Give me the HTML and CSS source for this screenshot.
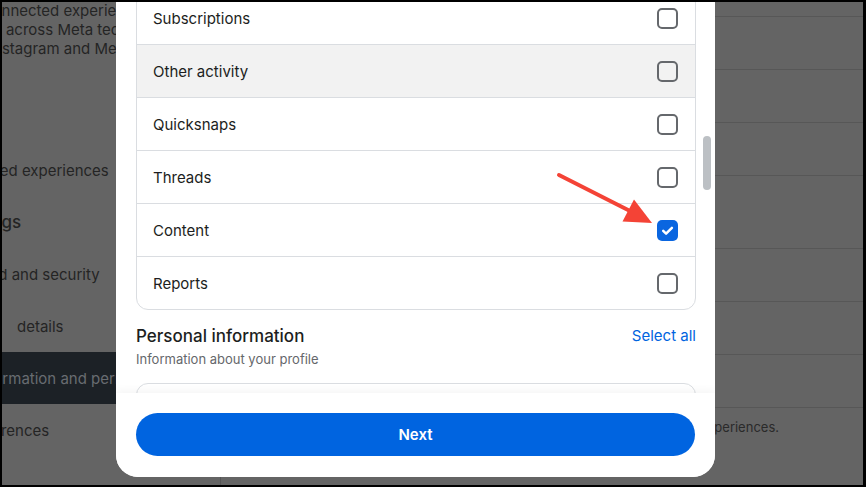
FILE: index.html
```html
<!DOCTYPE html>
<html lang="en">
<head>
<meta charset="utf-8">
<title>Download your information</title>
<link rel="stylesheet" href="styles.css">
</head>
<body>
<div class="screen">
  <div class="page">
    <aside class="sidebar">
      <div class="intro">
        <p class="intro-line l1">connected experiences and account settings</p>
        <p class="intro-line l2">settings across Meta technologies like Facebook,</p>
        <p class="intro-line l3">Instagram and Meta Horizon.</p>
      </div>
      <nav class="nav">
        <div class="nav-item"><span class="t1">Connected experiences</span></div>
        <div class="nav-item nav-head"><span class="t2">Settings</span></div>
        <div class="nav-item"><span class="t3">Password and security</span></div>
        <div class="nav-item"><span class="t4">details</span></div>
        <div class="nav-item active"><span class="t5">Your information and permissions</span></div>
        <div class="nav-item"><span class="t6">Ad preferences</span></div>
      </nav>
    </aside>
    <main class="content">
      <div class="row row-first"></div>
      <div class="row"></div>
      <div class="row"></div>
      <div class="row"></div>
      <div class="row row-tall"></div>
      <div class="row"></div>
      <div class="row"></div>
      <div class="row"></div>
      <p class="content-note">Choose how your information is used to personalize your experiences.</p>
    </main>
  </div>

  <div class="modal">
    <div class="modal-scroll">
      <div class="card">
        <div class="opt"><span>Subscriptions</span><span class="box"></span></div>
        <div class="opt hover"><span>Other activity</span><span class="box"></span></div>
        <div class="opt"><span>Quicksnaps</span><span class="box"></span></div>
        <div class="opt"><span>Threads</span><span class="box"></span></div>
        <div class="opt"><span>Content</span><span class="box checked"><svg viewBox="0 0 21 21" width="21" height="21"><path d="M6.2 10.8l2.9 2.8 5.8-5.8" fill="none" stroke="#fff" stroke-width="2.5" stroke-linecap="round" stroke-linejoin="round"/></svg></span></div>
        <div class="opt"><span>Reports</span><span class="box"></span></div>
      </div>
      <div class="section-head">
        <div>
          <h2 class="section-title">Personal information</h2>
          <p class="section-sub">Information about your profile</p>
        </div>
        <a class="select-all">Select all</a>
      </div>
      <div class="card card-next"></div>
    </div>
    <div class="scrollbar"></div>
    <div class="modal-footer"><button class="next-btn">Next</button></div>
  </div>

  <svg class="arrow" viewBox="2 2 861 483" width="861" height="483">
    <line x1="559" y1="175" x2="632" y2="212" stroke="#f44336" stroke-width="4" stroke-linecap="round"/>
    <polygon points="652,223 622.5,221.5 634,199.5" fill="#f44336"/>
  </svg>
</div>
</body>
</html>
```

FILE: styles.css
```css
* { box-sizing: border-box; }

html, body {
  margin: 0;
  background: #000;
}

body {
  padding: 2px 3px 2px 2px;
  font-family: Inter, "Liberation Sans", sans-serif;
  color: #1c1e21;
}

.screen {
  position: relative;
  width: 861px;
  height: 483px;
  overflow: hidden;
  background: #646464;
}

/* background page (dimmed) */
.page {
  display: flex;
  height: 100%;
}

.sidebar {
  width: 219px;
  flex: none;
  border-right: 1px solid #555;
  overflow: hidden;
  color: #242424;
}

.intro {
  margin-top: -1px;
}

.intro-line {
  margin: 0;
  font-size: 15px;
  line-height: 19px;
  white-space: nowrap;
}

.l1 { margin-left: -18px; }
.l2 { margin-left: -56px; }
.l3 { margin-left: -13px; }

.nav {
  margin-top: 86px;
}

.nav-item {
  height: 52px;
  display: flex;
  align-items: center;
  font-size: 15px;
  white-space: nowrap;
}

.nav-head {
  font-size: 17px;
  font-weight: 500;
}

.nav-item.active {
  background: #1c2126;
  color: #686c71;
}

.t1 { margin-left: -62px; }
.t2 { margin-left: -47px; }
.t3 { margin-left: -64px; }
.t4 { margin-left: 15px; }
.t5 { margin-left: -63px; }
.t6 { margin-left: -62px; }

.content {
  flex: 1;
}

.row {
  height: 53px;
  border-bottom: 1px solid #575757;
}

.row-first { height: 15px; }
.row-tall { height: 73px; }

.content-note {
  margin: 11px 0 0;
  padding-right: 84px;
  text-align: right;
  font-size: 13px;
  line-height: 16px;
  color: #2a2a2a;
  white-space: nowrap;
}

/* modal */
.modal {
  position: absolute;
  left: 114px;
  top: -20px;
  width: 599px;
  height: 495px;
  background: #fff;
  border-radius: 22px;
  display: flex;
  flex-direction: column;
  overflow: hidden;
}

.modal-scroll {
  flex: 1;
  overflow: hidden;
  padding: 9px 19px 0 20px;
}

.card {
  border: 1px solid #dadde1;
  border-radius: 12px;
  overflow: hidden;
}

.opt {
  height: 53px;
  border-top: 1px solid #dadde1;
  display: flex;
  align-items: center;
  justify-content: space-between;
  padding: 0 17px 0 16px;
  font-size: 15px;
  color: #1c1e21;
}

.opt:first-child {
  height: 52px;
  border-top: 0;
}

.opt.hover { background: #f2f2f2; }

.box {
  width: 21px;
  height: 21px;
  border: 2px solid #65686c;
  border-radius: 5px;
  flex: none;
}

.box.checked {
  border: 0;
  background: #0a66e0;
  display: flex;
}

.section-head {
  margin-top: 15px;
  display: flex;
  justify-content: space-between;
  align-items: flex-start;
}

.section-title {
  margin: 0;
  font-size: 17px;
  line-height: 22px;
  font-weight: 500;
  color: #1c1e21;
}

.section-sub {
  margin: 4px 0 0;
  font-size: 13px;
  line-height: 16px;
  color: #65676b;
}

.select-all {
  font-size: 15px;
  line-height: 22px;
  color: #0064e0;
}

.card-next {
  margin-top: 16px;
  height: 200px;
}

.scrollbar {
  position: absolute;
  left: 587px;
  top: 154px;
  width: 8px;
  height: 54px;
  border-radius: 4px;
  background: #bcc0c4;
}

.modal-footer {
  height: 84px;
  flex: none;
  padding: 20px;
  background: #fff;
  box-shadow: 0 -3px 8px rgba(0, 0, 0, 0.04);
  position: relative;
}

.next-btn {
  width: 100%;
  height: 43px;
  border: 0;
  border-radius: 22px;
  background: #0064e0;
  color: #fff;
  font-family: inherit;
  font-size: 15px;
  font-weight: 600;
}

.arrow {
  position: absolute;
  left: 0;
  top: 0;
}
```
